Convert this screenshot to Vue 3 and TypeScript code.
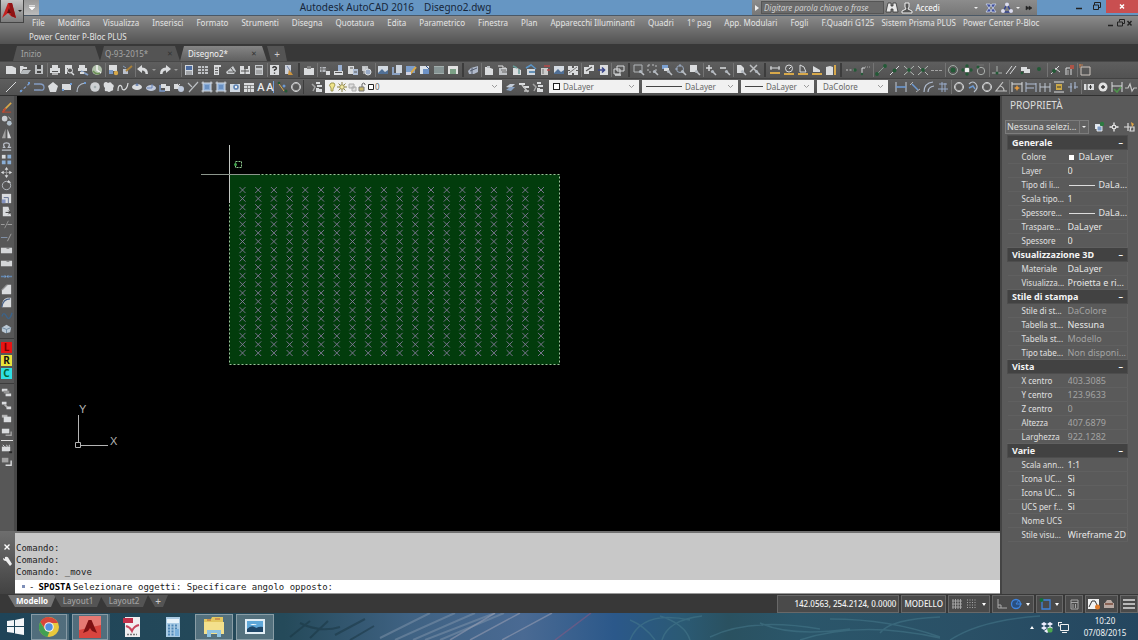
<script setup lang="ts">
import { ref } from 'vue'

const W = '#e6e8ea'
const B = '#6f9fdc'
const G = '#1f5a34'
const Y = '#e3b04a'

/* Small builders for the 14x14 icon artwork */
const s = (d: string, c = W, w = 1) => `<path d="${d}" fill="none" stroke="${c}" stroke-width="${w}"/>`
const f = (d: string, c = W) => `<path d="${d}" fill="${c}"/>`
const c = (x: number, y: number, r: number, fill = 'none', stroke = 'none') =>
  `<circle cx="${x}" cy="${y}" r="${r}" fill="${fill}" stroke="${stroke}"/>`
const glass = s('M9 9l3 3', '#c9ccd0', 1.6) + c(8.5, 8.5, 1.6, '#b9c0c8')

const icons: Record<string, string> = {
  blank: f('M2 3h6l4 2v6H2z'),
  open: f('M2 3h3l1 1h3v2H5l-2 4H2z') + f('M5 7h8l-3 4H2z', '#bfc3c6'),
  save: f('M3 2h8v9H3z', '#c6c9cc') + f('M5 2h4v4H5z', '#444') + f('M5 8h4v2H5z', '#444'),
  print: f('M4 2h6v3H4zM2 5h10v5H2z') + f('M4 8h6v1H4z', '#555') + f('M4 10h6v2H4z', '#bbb'),
  preview: f('M3 2h7v3H5v6H3z') + c(8, 7.5, 2.5, '#555', W) + s('M9 9l3 3', W, 1.5),
  plot: f('M3 2h6v3H3zM2 5h9v3H2z') + s('M5 8l7 4', '#8ba7cf', 2) + f('M4 9h4v2H4z'),
  globe: c(7, 7, 5, '#b9cbb2') + s('M7 2v5l4 3', '#fff', 1.5) + s('M3 8q3 4 7 2', '#6d9556', 1.5),
  sheet: f('M3 2h8v6H3z') + f('M3 7h4v4H3z', '#7fa0d0') + c(10, 10, 2.2, Y),
  spark: f('M3 6h5v5H3z', '#c3cad6') + s('M6 8l6-5', '#b08436', 2) + s('M3 3l3 2', '#8ca4c8'),
  undo: f('M1 6l5-4v2.500q6 0 6 6.500h-2.500q0-3.500-3.500-3.500V10z'),
  redo: f('M13 6L8 2v2.500q-6 0-6 6.500h2.500q0-3.500 3.500-3.500V10z'),
  props: f('M3 2h8v10H3z', '#dce1e8') + f('M4 3h6v4H4z', '#4d6fa8') + s('M4 9h6M4 11h6', '#777'),
  grid: f('M2 3h10v8H2z', '#c9ccd0') + s('M2 5.500h10M5.500 3v8M8.500 3v8M2 8.500h10', '#666'),
  palette: f('M4 2h7v2H9v8H4z') + s('M5 5h3M5 7.500h3M5 10h3', '#555'),
  sets: f('M2 9l7-6 3 5-2 3H3z', '#d2d5d8') + s('M4 9h7M7 5l3 4', '#555'),
  markup: f('M2 3h4v3h4V3h2v8H2z') + s('M3 8h8M7 6v5', '#555'),
  calc: f('M3 2h8v10H3z', '#d0d3d6') + s('M4 4h6', '#555', 1.5) + s('M5 7v4M7 7v4M9 7v4', '#888'),
  help: f('M2 2h9v10H2z') + s('M4.500 5q2-2.500 4 0 0 1.500-2 2v1M6.500 9.500v1.200', '#333', 1.3),
  note: f('M3 2h6v9H3z', '#d5dbe6') + f('M7 6l4 6H6z', '#d79a3c') + s('M5 3l4 6', '#7c8fb5'),
  book: f('M2 5h3V3h4v2h3v7H2z') + f('M5 3h4v3H5z', '#888'),
  group: f('M2 4h6v5H2z', '#bfc3c8') + s('M4 2v9M2 6h9M8 5v7', '#666') + f('M8 8h4v4H8z'),
  attach: f('M2 8h9v4H2z') + f('M6 2h4v6H6z', '#9fb7db') + s('M3 9.500h7', '#555'),
  clip: f('M2 3h6v8H2z') + f('M7 6h5v6H7z', '#b7c7df') + s('M4 5h3M8 9h3', '#555'),
  link: f('M2 3h6v5H2z', '#c9ccd0') + c(8, 9, 3, '#9fb2d0', W) + s('M4 4v7', W),
  image: f('M2 3h10v8H2z', '#dfe7ef') + f('M2 10l4-4 3 3 3-2v4H2z', '#50729b'),
  frame: f('M6 2h6v8H6z', '#d6dee8') + s('M3 4v7h7', '#8fa8cc', 2),
  imgEdit: f('M2 3h9v7H2z', '#7fa3d4') + s('M6 11l6-7', Y, 2) + f('M2 9h5v3H2z', '#dde'),
  imgBlue: f('M2 3h9v8H2z', '#e6edf5') + f('M5 6h6v5H5z', '#6f97cf') + s('M8 3l3 3', '#30518a'),
  imgGrey: f('M2 3h10v8H2z', '#a9b6b4') + s('M2 5h10M2 7h10M2 9h10', '#6d7f80'),
  imgGreen: f('M2 3h10v8H2z', '#eee') + f('M4 6h6v5H4z', '#7fa78a'),
  vehicle: f('M2 8l3-3 7-2v6l-4 2H3z', '#b8c2d4') + s('M4 8l7-3M6 5v6', '#525d70'),
  house: f('M3 4h3l5 2v6H3z') + f('M5 3h3v2H5z', '#c4c8cc'),
  houseSel: f('M3 5h8v7H3z', '#c8ccd0') + s('M2 3h5v5M9 4v3', '#eee') + s('M5 7h5M6 9h5', '#666'),
  houseA: f('M3 5h4l4 2v5H3z') + s('M3 3l4 2M9 6v5', '#6aa3a0', 1.5),
  houseB: f('M3 6h8v6H3z', '#dce3ea') + s('M2 5l5-3 5 4', '#5b9ad0', 1.5) + s('M5 9h6', '#3f7bb0', 1.5),
  houseR: f('M3 5h7v7H3z', '#d8d8d8') + s('M6 3h6M9 7h3', '#c04848', 1.5) + s('M5 6v5', '#777'),
  puzzle: f('M2 3h4v2h2V3h4v4h-2v1h2v4H8v-2H6v2H2V8h2V7H2z') + s('M3 10l8-6', '#777'),
  pages: f('M2 4h5v7H2zM7 2h5v6H7z') + s('M4 8l6-4', '#555', 1.2),
  pageIn: f('M4 2h8v10H4z') + s('M2 7h6M6 4.500L8.500 7 6 9.500', '#39458f', 1.6),
  windows: s('M5 3h7v5H5zM2 6h6v5H2z') + s('M3 12h6', W, 1.5),
  zoomWin: s('M2 2h8v7H2z', '#b9bdc0') + glass,
  zoomDyn: `<path d="M2 2h8v7H2z" fill="none" stroke="#c6c8ca" stroke-dasharray="2 2"/>` + glass,
  zoomScale: f('M2 2h6v4H2z', '#7ea6dc') + f('M4 5h5v3H4z') + glass,
  zoomCtr: c(6, 6, 3.500, 'none', '#9fb0c8') + s('M6 1v3M1 6h3', '#9fb0c8') + glass,
  zoomObj: f('M2 2h7v7H2z') + glass,
  zoomIn: s('M2 5h6M5 2v6', W, 1.5) + glass,
  zoomOut: s('M2 5h6', W, 1.5) + glass,
  zoomAll: f('M3 2h4l3 3v5H3z') + glass,
  zoomExt: s('M2 2l7 7M9 2L2 9', '#c6c8ca', 1.5) + glass,
  dist: s('M2 5h10M3 3v4M11 3v4') + s('M2 10h10', Y, 2),
  radius: c(7, 5.500, 3.500, 'none', W) + s('M7 6l2-2') + s('M2 11h10', Y, 2),
  angle: s('M4 2v7h6L8 4 4 2') + s('M2 11h10', Y, 2),
  area: f('M3 3l7 4v2H3z') + s('M2 11h10', Y, 2),
  volume: f('M2 4l4-1 3 1v8H2z') + s('M11 2v10', Y, 2),
  trackA: `<path d="M2 7h8" stroke="#ccc" stroke-dasharray="2 1.500"/>` + c(11, 7, 1.7, G),
  trackB: s('M4 12V5h3') + `<path d="M7 4h6" stroke="#aaa" stroke-dasharray="1 1"/>` + c(4, 11, 1.2, G),
  end: s('M3 11l8-8', '#8ea395') + c(3, 11, 1.9, G) + c(11, 3, 1.9, G),
  mid: s('M2 12l9-9') + c(6.500, 7.500, 2, G),
  inter: s('M2 3l10 9M12 3L2 12', '#bcc4bf') + c(7, 7, 1.9, G),
  appInt: s('M2 3l3 3M12 3L2 12M9 9l3 3', '#bcc4bf') + c(7, 7, 1.9, G),
  ext: `<path d="M1 7.500h12" stroke="#aaa" stroke-dasharray="3 1"/>`,
  center: c(7, 7, 4.500, 'none', '#a9b4ad') + c(7, 7, 2.500, G),
  quad: c(7, 7, 2.500, '#fff') + c(7, 3, 1.7, G) + c(7, 11, 1.7, G) + c(3, 7, 1.700, G) + c(11, 7, 1.7, G),
  tan: c(7, 8, 3.700, 'none', '#b3b8b5') + s('M3 2h7', '#777') + c(4, 4, 1.500, G),
  perp: s('M2 10h10M7 3v7', '#b3b8b5') + c(7, 10, 1.5, G),
  para: s('M2 11l6-8M6 11l6-8'),
  insert: f('M3 4h6v4H3zM6 6h6v4H6z') + c(4, 10, 1.300, G),
  node: c(7, 6, 2, G),
  near: s('M3 11l8-8M7 5l5 4') + c(6, 8, 2, G),
  none: s('M4 12V5h5v7') + f('M8 2h4v4H8z', '#b55446') + s('M6 7v5', '#bbb'),
  osnap: s('M3 4h9v8H3z', '#d8cfc8') + s('M1 2h4M2 1v4', '#c78152'),
  line: s('M2 12L12 2'),
  xline: `<path d="M2 12L12 3" stroke="#8aa8d8" stroke-width="1.200" stroke-dasharray="3 2"/>` + f('M10 2h2v2h-2zM2 10h2v2H2z', B),
  pline: s('M2 4h6q4 0 4 3.500T8 10H2', '#88a2cc', 1.3),
  poly: f('M7 2l5 4-2 6H4L2 6z'),
  rect: f('M2 4h9v6H2z') + f('M2 9h2v2H2zM10 3h2v2h-2z', B),
  arc: s('M3 12Q3 4 11 3', '#b9c3d1', 1.2) + f('M10 2h2v2h-2z', B),
  circle: c(7, 7, 4.800, '#d9dcdf') + c(7, 7, 1.300, '#aab6b8'),
  cloud: f('M2 3q2-2 4 0 3-2 4 1 3 1 1 4 1 3-2 3-2 2-4 0-3 1-2-3-2-2-1-5z'),
  spline: s('M2 11c0-8 4-6 4-3s5 3 6-5', W, 1.2),
  ellipse: `<ellipse cx="7" cy="7" rx="5" ry="3" fill="${W}"/>` + s('M7 3v3M5.500 5h3', '#5272ad'),
  ellArc: `<ellipse cx="7" cy="8" rx="5" ry="3" fill="#c9d3e6"/>` + s('M3 8h5V4', '#6685bf'),
  block: f('M3 4h5v4H3zM7 6h5v5H7z') + s('M2 5v6h5', '#7e9fd4', 1.5),
  mkBlock: f('M2 4h6v5H2z') + c(9, 9, 3, '#c8d4e8') + s('M5 3l3 3', '#777'),
  point: s('M2 3l4 4M12 2L3 12', '#c4c8cc', 1.2),
  hatch: f('M3 3h8v8H3z', '#8fb3e0') + s('M1.500 3h11M1.500 11h11M3 1.500v11M11 1.500v11', '#dfe6ef') + f('M5 5h4v4H5z', '#6c96cc'),
  region: f('M2 4h10v8H2z', '#dbe4ee') + c(8, 7, 2.800, '#5d87bd') + c(8, 7, 1.200, '#fff'),
  table: f('M2 3h10v9H2z') + s('M2 5.500h10M2 8.500h10M5.500 5v7M8.500 5v7', '#777', 0.8),
  dots: c(4, 3, 1.300, G) + c(9, 6, 1.500, B) + c(11, 11, 1.500, G) + s('M4 4l5 7', Y),
  ring: c(7, 7, 4.500, 'none', W) + c(7, 7, 3.800, 'none', '#bbb'),
  layers: f('M6 2h4v2H6zM7 5h5v2H7zM6 8h3v4H6zM9 9h3v3H9z') + s('M2 4l3 3-2 4', '#aaa', 1.5),
  layPrev: f('M3 7l4-3h5l-4 4z', '#cdd6e2') + f('M3 10l4-3h5l-4 4z', '#8ea9cc'),
  layMatch: f('M2 3h6v2H2zM6 6h6v2H6z') + s('M5 5l6 7M7 11h5', '#ccc', 1.5),
  dimLin: s('M2 2v10M12 2v10', '#ccd5e3') + s('M2 7h10', B, 1.6),
  dimAl: s('M2 5l3-3M8 12l4-3', '#bbb') + s('M4 4l6 6', B, 1.5),
  dimArc: s('M2 12q0-9 9-10M6 12q0-5 6-6', '#b7c4d8', 1.2),
  dimOrd: s('M2 9h10M6 2v10M9 3v9M3 4h8', '#9fb3d4'),
  dimJog: s('M3 4q4-4 7 0t-2 8', '#c3cad4', 1.2) + s('M3 8l4-2 2 3', B, 1.4),
  dimAng: s('M9 2L2 11h11M6 6q4 1 4 5', '#ccc', 1.2),
  dimQ: s('M2 2v10M12 2v10M2 4h10') + f('M7 5l1 2 2 1-2 1-1 2-1-2-2-1 2-1z', '#f0a03c'),
  dimBase: s('M2 2v10M2 4h10M2 8h8M12 3v9', '#b9c8e0'),
  dimCont: s('M2 3v9M7 3v9M12 3v9M2 7h10', '#c8d0dc'),
  dimSp: s('M2 2h10M2 12h10') + f('M4 4h6v6H4z', '#d6b047') + s('M5 7h4', '#333'),
  dimBr: s('M2 7h4M8 7h4M5 3v9M9 2v7', '#a9b9d4', 1.2),
  tol: f('M2 4h10v6H2z') + s('M5 4v6M7 7h3M8.500 5v4', '#333'),
  mark: c(7, 7, 4.500, '#eee') + s('M5 7h4M7 5v4', '#333', 1.300),
  insp: s('M2 2v10M12 2v10M2 6h10') + s('M4 9l3 3 4-5', '#4f9a4c', 1.6),
  jog: s('M1 8h3l2-4 2 7 2-3h3', '#ccc', 1.2),
  erase: s('M4 10l8-8', Y, 1.8) + s('M2 12h10', '#b64b34', 1.200) + s('M3 12l3-4', '#c64930', 2),
  copy: c(5, 5, 3, '#d5d9de') + c(10, 10, 2.600, '#b9c9d6') + s('M9 3l3 3', '#ddd'),
  mirror: f('M6 2v10H2z', '#aaa') + f('M8 2v10h4z'),
  offset: s('M2 11h10M3 8h2q-3-5 2-5t2 5h3', '#c4cad4', 1.4),
  array: f('M2 2h4v4H2z') + f('M8 2h4v4H8zM2 8h4v4H2zM8 8h4v4H8z', '#8fb6e0'),
  move: s('M7 2v10M2 7h10', '#999') + f('M7 1l2 3H5zM7 13l2-3H5zM1 7l3-2v4zM13 7l-3-2v4z'),
  rotate: c(7, 7, 4.500, 'none', '#bfc5cc') + f('M9 1l3 3H8z'),
  scale: f('M2 2h10v10H2z') + s('M4 6h5v6', '#5f6f95') + f('M2 8h4v4H2z', '#8797c8'),
  stretch: f('M3 2h6l3 10H3z') + s('M6 8h5M9 6l2 2-2 2', '#333'),
  trim: s('M1 7h4M8 7h5', '#aaa') + s('M5 11l4-8', '#999'),
  extend: s('M1 7h7', '#889bb5') + s('M8 11l4-8', '#aaa'),
  brk: f('M1 4h12v6H1z', '#dfe1e4') + f('M7 4h3v1H7z', '#666'),
  join: s('M1 7h4M9 7h4', '#638cb8', 1.5) + f('M5 5l2 2-2 2zM9 5L7 7l2 2z', '#7baae0'),
  chamfer: f('M2 12V7l5-5h5v10z') + s('M2 8l6-6', '#777'),
  fillet: f('M2 12q0-9 6-10h4v10z') + s('M2 12q1-9 9-9', '#49658f', 1.4),
  blend: s('M2 8q2-6 5 0t6-4', '#3a648e', 1.5),
  explode: f('M2 6l5-3 5 3-1 5-5 1-4-2z', '#c3d2df') + s('M2 6l5 2 5-2M7 8v4', '#6f8da5'),
  order: f('M2 3h6v3H2zM6 8h6v3H6z') + f('M4 5h6v3H4z', '#999'),
  orderB: f('M2 3h5v3H2zM7 8h5v3H7z') + s('M5 6l3 3', '#bbb', 2),
  orderC: f('M2 3h6v3H2z', '#bbb') + f('M4 5h8v6H4z'),
  orderD: f('M2 4h8v5H2z') + s('M6 11h6V7', '#aaa', 1.5),
  orderE: f('M2 5h9v5H2z') + s('M3 3l2 2M7 3l1 2M10 3v2') + f('M10 10h3v2h-3z', '#222'),
  hatchB: f('M2 3h7v5H2z', '#aaa') + s('M6 11h6V6', W, 1.5),
}

const barOne: string[][][] = [
  [
    ['blank', 'open', 'save'], ['print', 'preview', 'plot', 'globe'], ['sheet', 'spark'],
    ['undo', '', 'redo', ''], ['props', 'grid', 'palette', 'sets', 'markup', 'calc'], ['help', 'note'],
  ],
  [['book'], ['group', 'attach', 'clip', 'link'], ['image', 'frame', 'imgEdit', 'imgBlue', 'imgGrey', 'imgGreen']],
  [['vehicle'], ['house', 'houseSel', 'houseA', 'houseB', 'houseR', 'image', 'puzzle'], ['pages', 'pageIn'], ['windows']],
  [['zoomWin', 'zoomDyn', 'zoomScale', 'zoomCtr', 'zoomObj'], ['zoomIn', 'zoomOut'], ['zoomAll', 'zoomExt']],
  [['dist', 'radius', 'angle', 'area', 'volume']],
  [
    ['trackA', 'trackB'], ['end', 'mid', 'inter', 'appInt', 'ext'], ['center', 'quad', 'tan'],
    ['perp', 'para', 'insert', 'node'], ['near', 'none'], ['osnap'],
  ],
]
const drawTools = [
  'line', 'xline', 'pline', 'poly', 'rect', 'arc', 'circle', 'cloud', 'spline', 'ellipse', 'ellArc',
  'block', 'mkBlock', 'point', 'hatch', 'hatch', 'region', 'table', 'A', 'A|', 'dots', 'ring',
]
const dimTools = [
  ['dimLin', 'dimAl', 'dimArc', 'dimOrd'], ['ring', 'dimJog', 'ring', 'dimAng'],
  ['dimQ', 'dimBase', 'dimCont', 'dimSp', 'dimBr'], ['tol', 'mark', 'insp', 'jog'],
]
const modifyTools = [
  'erase', 'copy', 'mirror', 'offset', 'array', 'move', 'rotate', 'scale', 'stretch',
  'trim', 'extend', 'brk', 'brk', 'join', 'chamfer', 'fillet', 'blend', 'explode',
]
const lisp = [
  { t: 'L', k: 'red' }, { t: 'R', k: 'yellow' }, { t: 'C', k: 'cyan' },
]
const orderTools = ['order', 'orderB', 'orderC', 'orderD']

const menus = [
  'File', 'Modifica', 'Visualizza', 'Inserisci', 'Formato', 'Strumenti', 'Disegna', 'Quotatura', 'Edita',
  'Parametrico', 'Finestra', 'Plan', 'Apparecchi Illuminanti', 'Quadri', '1° pag', 'App. Modulari', 'Fogli',
]
const menusEnd = ['F.Quadri G125', 'Sistem Prisma PLUS', 'Power Center P-Bloc']

interface Row { k: string; v: string; dim?: boolean; mark?: 'box' | 'line' }
const sections: { title: string; rows: Row[] }[] = [
  {
    title: 'Generale',
    rows: [
      { k: 'Colore', v: 'DaLayer', mark: 'box' }, { k: 'Layer', v: '0' },
      { k: 'Tipo di li...', v: 'DaLa...', mark: 'line' }, { k: 'Scala tipo...', v: '1' },
      { k: 'Spessore...', v: 'DaLa...', mark: 'line' }, { k: 'Traspare...', v: 'DaLayer' }, { k: 'Spessore', v: '0' },
    ],
  },
  { title: 'Visualizzazione 3D', rows: [{ k: 'Materiale', v: 'DaLayer' }, { k: 'Visualizza...', v: 'Proietta e ri...' }] },
  {
    title: 'Stile di stampa',
    rows: [
      { k: 'Stile di st...', v: 'DaColore', dim: true }, { k: 'Tabella st...', v: 'Nessuna' },
      { k: 'Tabella st...', v: 'Modello', dim: true }, { k: 'Tipo tabe...', v: 'Non disponi...', dim: true },
    ],
  },
  {
    title: 'Vista',
    rows: [
      { k: 'X centro', v: '403.3085', dim: true }, { k: 'Y centro', v: '123.9633', dim: true },
      { k: 'Z centro', v: '0', dim: true }, { k: 'Altezza', v: '407.6879', dim: true },
      { k: 'Larghezza', v: '922.1282', dim: true },
    ],
  },
  {
    title: 'Varie',
    rows: [
      { k: 'Scala ann...', v: '1:1' }, { k: 'Icona UC...', v: 'Sì' }, { k: 'Icona UC...', v: 'Sì' },
      { k: 'UCS per f...', v: 'Sì' }, { k: 'Nome UCS', v: '' }, { k: 'Stile visu...', v: 'Wireframe 2D' },
    ],
  },
]

const markCols = Array.from({ length: 20 }, (_, i) => Math.round((225.5 + i * 15.71) * 10) / 10)
const markRows = Array.from({ length: 20 }, (_, i) => Math.round((94 + i * 8.58) * 10) / 10)
const cross = (x: number, y: number) => `M${x - 3} ${y - 3}l6 6m0-6l-6 6`
const marks = markRows.map(y => markCols.map(x => cross(x, y)).join('')).join('')

const search = ref('')
const command = ref('Selezionare oggetti: Specificare angolo opposto:')
</script>

<template>
  <div class="app">
    <header class="title">
      <button class="logo" aria-label="Menu applicazione">
        <svg width="24" height="23" viewBox="0 0 24 23">
          <path d="M2 18L8 3h4l4 15-5-2-3-3z" fill="#c3211f" />
          <path d="M9 3h3l4 15-5-2z" fill="#8f1415" />
          <path d="M9 8l2 5H7z" fill="#5e0f10" />
          <path d="M18 10h4l-2 2z" fill="#222" />
        </svg>
      </button>
      <button class="quick" aria-label="Personalizza barra"><svg width="8" height="8" viewBox="0 0 8 8"><path d="M1 1.500h6M1 3h6L4 6z" fill="#fff" stroke="#fff" stroke-width=".6" /></svg></button>
      <div class="name"><span>Autodesk AutoCAD 2016</span><span>Disegno2.dwg</span></div>
      <div class="info">
        <svg width="9" height="14" viewBox="0 0 9 14"><path d="M3 4l4 3-4 3z" fill="#eee" /></svg>
        <input v-model="search" aria-label="Cerca" placeholder="Digitare parola chiave o frase">
        <button aria-label="Trova"><svg width="14" height="14" viewBox="0 0 14 14"><path d="M3 2h3v3h2V2h3l2 9H8V8H6v3H1z" fill="#e8e8e8" stroke="#333" stroke-width=".8" /></svg></button>
        <button class="login"><svg width="14" height="14" viewBox="0 0 14 14"><path d="M5 2h4v4L8 8l4 2v2H2v-2l4-2-1-2z" fill="#555" stroke="#eee" /></svg>Accedi<i class="caret small push"></i></button>
        <button aria-label="Exchange"><svg width="14" height="14" viewBox="0 0 14 14"><path d="M2 3h4l6 8H8zM12 3H8L2 11h4z" fill="#3f4f9c" stroke="#cdd6ec" stroke-width=".8" /></svg></button>
        <button class="conn" aria-label="Connessione"><svg width="14" height="14" viewBox="0 0 14 14"><path d="M7 3L3 11h8z" fill="none" stroke="#33438f" stroke-width="1.500" /><circle cx="7" cy="3.500" r="2" fill="#dde" /><circle cx="3" cy="10" r="2" fill="#dde" /><circle cx="11" cy="10" r="2" fill="#dde" /></svg><i class="caret small"></i></button>
        <button aria-label="Altro"><svg width="14" height="14" viewBox="0 0 14 14"><path d="M4 5l3 2-3 2zM7 5l3 2-3 2z" fill="#222" stroke="#222" stroke-width=".5" /></svg></button>
      </div>
      <div class="wincontrols">
        <button aria-label="Riduci"><svg width="14" height="13" viewBox="0 0 14 13"><path d="M4 8.500h6" stroke="#222" stroke-width="1.500" /></svg></button>
        <button aria-label="Ripristina"><svg width="14" height="13" viewBox="0 0 14 13"><path d="M4.500 5V2.500h6v5H9M3.500 5h5v4.500h-5z" fill="none" stroke="#222" /></svg></button>
        <button class="close" aria-label="Chiudi"><svg width="14" height="13" viewBox="0 0 14 13"><path d="M5 4.500l4 4m0-4l-4 4" stroke="#fff" stroke-width="1.500" /></svg></button>
      </div>
    </header>

    <nav class="menus">
      <div class="menurow">
        <button v-for="m in menus" :key="m">{{ m }}</button>
        <button v-for="m in menusEnd" :key="m" class="tight">{{ m }}</button>
        <svg class="mdi" width="26" height="10" viewBox="0 0 26 10"><path d="M1 7.500h5" stroke="#222" stroke-width="1.500" /><path d="M12.500 3.500v-2h5v4h-2M10.500 4h5v4h-5z" fill="none" stroke="#222" /><path d="M20.500 3l4 4.500m0-4.500l-4 4.500" stroke="#222" stroke-width="1.400" /></svg>
      </div>
      <div class="menurow second"><button>Power Center P-Bloc PLUS</button></div>
    </nav>

    <div class="filetabs">
      <button class="ftab">Inizio</button>
      <button class="ftab mid">Q-93-2015*<span>✕</span></button>
      <button class="ftab active">Disegno2*<span>✕</span></button>
      <button class="ftab plus" aria-label="Nuovo">+</button>
    </div>

    <div class="bar">
      <div v-for="(tb, i) in barOne" :key="i" class="strip">
        <div v-for="(g, j) in tb" :key="j" class="grp">
          <button v-for="(n, k) in g" :key="k" :class="n ? 'ic' : 'drop'" :aria-label="n || 'elenco'">
            <svg v-if="n" width="14" height="14" viewBox="0 0 14 14" v-html="icons[n]"></svg>
            <i v-else class="caret faint"></i>
          </button>
        </div>
      </div>
    </div>

    <div class="bar two">
      <div class="draw">
        <button v-for="(n, k) in drawTools" :key="k" class="ic" :aria-label="n">
          <svg v-if="icons[n]" width="14" height="14" viewBox="0 0 14 14" v-html="icons[n]"></svg>
          <b v-else :class="{ cursor: n === 'A|' }">A</b>
        </button>
      </div>
      <button class="ic lay" aria-label="Proprietà layer"><svg width="14" height="14" viewBox="0 0 14 14" v-html="icons.layers"></svg></button>
      <label class="combo layer">
        <svg width="52" height="12" viewBox="0 0 52 12">
          <path d="M4 7Q1 4 4 2q4-1 4 2L6 8v2H4z" fill="#f0e48a" stroke="#8a8540" stroke-width=".8" />
          <circle cx="15" cy="6" r="2.300" fill="#f2e9a4" stroke="#8d8446" />
          <path d="M15 1v2M15 9v2M10 6h2M18 6h2M11.500 2.500l1.500 1.500M18.500 2.500L17 4M11.500 9.500L13 8M18.500 9.500L17 8" stroke="#8d8446" />
          <path d="M22 3h5v4h-5zM25 6h4v4h-4z" fill="#ddd" stroke="#aaa" />
          <path d="M32 6h5v4h-5z" fill="#c8b86a" stroke="#777" /><path d="M35 6V3q2-2 3 0v1" fill="none" stroke="#666" />
          <path d="M41.500 3.500h5v5h-5z" fill="#fff" stroke="#222" />
        </svg>
        <select aria-label="Layer"><option>0</option></select>
        <svg class="chev" width="7" height="5" viewBox="0 0 7 5"><path d="M1 1l2.500 2.500L6 1" fill="none" stroke="#999" /></svg>
      </label>
      <button class="ic" aria-label="Layer precedente"><svg width="14" height="14" viewBox="0 0 14 14" v-html="icons.layPrev"></svg></button>
      <button class="ic" aria-label="Corrispondenza layer"><svg width="14" height="14" viewBox="0 0 14 14" v-html="icons.layMatch"></svg></button>
      <button class="ic" aria-label="Stati layer"><svg width="14" height="14" viewBox="0 0 14 14" v-html="icons.layers"></svg></button>
      <label class="combo color">
        <span class="swatch"></span>
        <select aria-label="Colore"><option>DaLayer</option></select>
        <svg class="chev" width="7" height="5" viewBox="0 0 7 5"><path d="M1 1l2.500 2.500L6 1" fill="none" stroke="#999" /></svg>
      </label>
      <label class="combo ltype">
        <span class="rule"></span>
        <select aria-label="Tipo di linea"><option>DaLayer</option></select>
        <svg class="chev" width="7" height="5" viewBox="0 0 7 5"><path d="M1 1l2.500 2.500L6 1" fill="none" stroke="#999" /></svg>
      </label>
      <label class="combo lweight">
        <span class="rule short"></span>
        <select aria-label="Spessore di linea"><option>DaLayer</option></select>
        <svg class="chev" width="7" height="5" viewBox="0 0 7 5"><path d="M1 1l2.500 2.500L6 1" fill="none" stroke="#999" /></svg>
      </label>
      <label class="combo plotst">
        <select aria-label="Stile di stampa"><option>DaColore</option></select>
        <svg class="chev" width="7" height="5" viewBox="0 0 7 5"><path d="M1 1l2.500 2.500L6 1" fill="none" stroke="#999" /></svg>
      </label>
      <div class="strip dims">
        <div v-for="(g, j) in dimTools" :key="j" class="grp">
          <button v-for="(n, k) in g" :key="k" class="ic" :aria-label="n"><svg width="14" height="14" viewBox="0 0 14 14" v-html="icons[n]"></svg></button>
        </div>
      </div>
    </div>

    <main class="main">
      <div class="left">
        <div class="work">
          <aside class="side">
            <button v-for="(n, k) in modifyTools" :key="k" :aria-label="n"><svg width="13" height="13" viewBox="0 0 14 14" v-html="icons[n]"></svg></button>
            <hr>
            <button v-for="l in lisp" :key="l.t"><b :class="l.k">{{ l.t }}</b></button>
            <hr>
            <button v-for="n in orderTools" :key="n" :aria-label="n"><svg width="13" height="13" viewBox="0 0 14 14" v-html="icons[n]"></svg></button>
            <hr class="white">
            <button aria-label="Annotazioni"><svg width="13" height="13" viewBox="0 0 14 14" v-html="icons.orderE"></svg></button>
            <button aria-label="Tratteggi"><svg width="13" height="13" viewBox="0 0 14 14" v-html="icons.hatchB"></svg></button>
          </aside>
          <div class="canvas">
            <svg width="100%" height="100%">
              <rect x="212.500" y="78.500" width="330" height="190" fill="#023c0c" />
              <path :d="marks" fill="none" stroke="#85789a" stroke-width=".9" />
              <rect x="212.500" y="78.500" width="330" height="190" fill="none" stroke="#9cc79c" stroke-dasharray="2 2" />
              <path d="M212.500 49v58" stroke="#c4c8c4" />
              <path d="M184 78.500h59" stroke="#8c968c" />
              <rect x="218.500" y="65.500" width="6" height="6" fill="none" stroke="#8fc98f" stroke-dasharray="2 1" />
              <circle cx="218.500" cy="68.500" r="1.500" fill="#3fa34a" />
              <path d="M61.500 319v27M64 349.500h27M58.500 346.500h5v5h-5z" fill="none" stroke="#b4b4b4" />
              <text x="62" y="317">Y</text>
              <text x="93" y="349">X</text>
            </svg>
          </div>
        </div>
        <section class="cmd">
          <div class="grip">
            <button aria-label="Chiudi riga di comando"><svg width="12" height="12" viewBox="0 0 12 12"><path d="M3.500 3.500l5 5m0-5l-5 5" stroke="#fff" stroke-width="1.400" /></svg></button>
            <button aria-label="Personalizza"><svg width="12" height="12" viewBox="0 0 12 12"><path d="M2 3l2 1V2q3-1 4 2l3 5-2 2-4-5Q2 6 2 3z" fill="#eee" /></svg></button>
          </div>
          <div class="console">
            <pre class="history">Comando:
Comando:
Comando: _move</pre>
            <label class="prompt"><i></i><span>-</span><b>SPOSTA</b><input v-model="command" spellcheck="false"></label>
          </div>
        </section>
      </div>

      <aside class="props">
        <h2>PROPRIETÀ</h2>
        <div class="pick">
          <label class="selwrap"><select aria-label="Selezione"><option>Nessuna selezi...</option></select><i class="caret"></i></label>
          <button aria-label="Attiva PICKADD"><svg width="12" height="12" viewBox="0 0 12 12"><path d="M2 3h5v5H2z" fill="#dfe6ee" /><path d="M4 5h5v5H4z" fill="#7d9bc4" stroke="#fff" stroke-width=".8" /><circle cx="9" cy="3" r="2.200" fill="#2c7a40" /></svg></button>
          <button aria-label="Seleziona oggetti"><svg width="12" height="12" viewBox="0 0 12 12"><path d="M6 1.500v3M6 7.500v3M1.500 6h3M7.500 6h3" stroke="#eee" stroke-width="1.300" /><rect x="4.500" y="4.500" width="3" height="3" fill="none" stroke="#ddd" /></svg></button>
          <button aria-label="Selezione rapida"><svg width="12" height="12" viewBox="0 0 12 12"><path d="M1 6h7M5 2v8M8 6h3v4H7z" stroke="#ddd" fill="none" stroke-width="1.200" /><path d="M8 1l3 2-2 3z" fill="#e3a94a" /></svg></button>
        </div>
        <table>
          <tbody v-for="sec in sections" :key="sec.title">
            <tr class="head"><th colspan="2"><span>{{ sec.title }}</span><em>–</em></th></tr>
            <tr v-for="(r, i) in sec.rows" :key="i">
              <th scope="row">{{ r.k }}</th>
              <td :class="{ dim: r.dim }"><i v-if="r.mark" :class="r.mark"></i>{{ r.v }}</td>
            </tr>
          </tbody>
        </table>
      </aside>
    </main>

    <footer class="status">
      <div class="ltabs">
        <button class="on">Modello</button><button>Layout1</button><button>Layout2</button><button class="add" aria-label="Nuovo layout">+</button>
      </div>
      <div class="cells">
        <div class="cell coords">142.0563, 254.2124, 0.0000</div>
        <button class="cell model">MODELLO</button>
        <div class="cell">
          <svg width="14" height="14" viewBox="0 0 14 14"><path d="M3 2v10M5.500 2v10M8 2v10M10.500 2v10M2 4h10M2 7h10M2 10h10" stroke="#aaa" stroke-width=".9" /></svg>
          <svg width="14" height="14" viewBox="0 0 14 14"><path d="M2 3h10M2 5.500h10M2 8h10M2 10.500h10" stroke="#aaa" stroke-dasharray="1 1.500" /></svg>
          <i class="caret lite"></i>
        </div>
        <div class="cell">
          <svg width="14" height="14" viewBox="0 0 14 14"><path d="M4 2v9h9M4 8h3v3" fill="none" stroke="#aaa" /></svg>
          <svg width="14" height="14" viewBox="0 0 14 14"><circle cx="7" cy="7" r="4.500" fill="#294f80" stroke="#3f84dd" stroke-width="1.300" /><path d="M7 7h6M7 7l3-4" stroke="#3f84dd" /></svg>
          <i class="caret lite"></i>
        </div>
        <div class="cell">
          <svg width="14" height="14" viewBox="0 0 14 14"><path d="M4 3h8v9H4z" fill="none" stroke="#3f84dd" stroke-width="1.300" /><circle cx="3.500" cy="3" r="2" fill="#14703a" /></svg>
          <i class="caret lite"></i>
        </div>
        <div class="cell"><svg width="14" height="14" viewBox="0 0 14 14"><path d="M4 3h7v9H4zM4 5.500h7M6 7v4M8.500 7v4" fill="none" stroke="#a5a5a5" /></svg></div>
        <div class="cell">
          <svg width="14" height="14" viewBox="0 0 14 14"><path d="M1 2h11v10H1z" fill="#f2f2f2" /><path d="M2 10l3-6h3l3 6" fill="none" stroke="#333" /><circle cx="10.500" cy="10" r="2.500" fill="#e07b2a" /></svg>
          <svg width="14" height="14" viewBox="0 0 14 14"><path d="M3 6l2-3h4l2 3h1v5H2V6z" fill="#b9a9a2" /><path d="M3 7h8" stroke="#7a4b3a" stroke-width="1.500" /></svg>
        </div>
        <button class="cell" aria-label="Personalizzazione"><svg width="14" height="14" viewBox="0 0 14 14"><path d="M1 3h12M1 7h12M1 11h12" stroke="#ddd" stroke-width="1.600" /></svg></button>
      </div>
    </footer>

    <div class="taskbar">
      <svg class="wall" viewBox="0 0 1138 27" preserveAspectRatio="none">
        <defs><linearGradient id="sky" x1="0" x2="1" y1="0" y2="0">
          <stop offset="0" stop-color="#1f4458" /><stop offset=".25" stop-color="#254a5a" /><stop offset=".36" stop-color="#3f6283" />
          <stop offset=".46" stop-color="#4a6a93" /><stop offset=".54" stop-color="#2b588a" /><stop offset=".6" stop-color="#2b5a74" />
          <stop offset=".64" stop-color="#2a5160" /><stop offset=".7" stop-color="#2b566a" /><stop offset=".85" stop-color="#2a5066" /><stop offset="1" stop-color="#24465f" />
        </linearGradient></defs>
        <rect width="1138" height="27" fill="url(#sky)" />
        <g fill="none" stroke-opacity=".5">
          <path d="M380 25l50-25M395 27l60-27M413 27l62-27M425 27l70-27M440 27l64-27" stroke="#8295ac" stroke-width="2" />
          <path d="M470 27l50-27M502 27l50-27M450 27l45-27" stroke="#a3a6b8" stroke-width="1.500" />
          <path d="M555 27l36-27" stroke="#93577f" stroke-width="1.500" />
          <path d="M630 27q12-30 60-20M655 27q-10-14-25-20M662 27q6-20 40-24M690 27q-5-16-30-24M710 24q40-20 110-8M760 10q30 14 90 6M800 27q60-20 140-2M830 6q60 0 110 18M880 20q10-14 60-16M950 27q30-20 90-24" stroke="#477b8d" stroke-width="1.500" />
          <path d="M290 24l20-16M310 25l18-17M335 22l30-16M350 27l24-14M300 10q20 10 40 4" stroke="#17333f" stroke-width="2" />
        </g>
      </svg>
      <button class="tb start" aria-label="Start"><svg width="17" height="17" viewBox="0 0 17 17"><path d="M0 3l7-1v6H0zM8 2l9-2v8H8zM0 9h7v6l-7-1zM8 9h9v8l-9-1.500z" fill="#f4f6f8" /></svg></button>
      <button class="tb run stack" aria-label="Chrome"><svg width="22" height="22" viewBox="0 0 22 22"><circle cx="11" cy="11" r="10" fill="#e8c83c" /><path d="M2.300 6A10 10 0 0 1 20 7h-9l-4 6z" fill="#d6463a" /><path d="M2.300 6l5 8 4 2-2 5A10 10 0 0 1 2.300 6z" fill="#42a052" /><circle cx="11" cy="11" r="4.800" fill="#f2f2f2" /><circle cx="11" cy="11" r="3.700" fill="#4f8fe0" /></svg></button>
      <button class="tb run stack" aria-label="AutoCAD"><svg width="22" height="22" viewBox="0 0 22 22"><rect width="22" height="22" fill="#d8453f" /><path d="M0 0h22v9L0 14z" fill="#ee9d96" opacity=".6" /><path d="M4 17L9.500 4h3L18 17l-5-2-2-3-2 3z" fill="#7d1113" /></svg></button>
      <button class="tb" aria-label="PDF"><svg width="22" height="22" viewBox="0 0 22 22"><path d="M4 1h15v20H4z" fill="#f0eef0" /><path d="M2 2h10v5H2z" fill="#c1304a" /><path d="M5 10q4 1 6 5 2-5 7-6" fill="none" stroke="#c8445c" stroke-width="2" /><path d="M6 18.500h10" stroke="#777" stroke-width="1.500" stroke-dasharray="2 1" /></svg></button>
      <button class="tb" aria-label="Calcolatrice"><svg width="22" height="22" viewBox="0 0 22 22"><path d="M4 1h14v20H4z" fill="#a9cbe4" /><path d="M5 3h12v4H5z" fill="#e8f3fa" /><path d="M6 9.500h10M6 12.500h10M6 15.500h10M6 18.500h10" stroke="#4e86b5" stroke-width="1.800" stroke-dasharray="2 1.500" /><path d="M13 13h4v7h-4z" fill="#7ab1dc" /></svg></button>
      <button class="tb run" aria-label="Esplora file"><svg width="22" height="22" viewBox="0 0 22 22"><path d="M1 3h7l1-2h11v17H1z" fill="#e3c75f" /><path d="M1 6h20v12H1z" fill="#f3e08c" /><path d="M4 4h4M12 3h5" stroke="#b35c3c" /><path d="M4 21v-7h14v7h-4v-4H8v4z" fill="#8fc3e2" /></svg></button>
      <button class="tb run" aria-label="Immagini"><svg width="22" height="22" viewBox="0 0 22 22"><path d="M1 3h20v15H1z" fill="#e2eef5" /><path d="M3 5h16v11H3z" fill="#5fa7d8" /><path d="M3 13q5-5 9-1 4-2 7-1v5H3z" fill="#1f4668" /><path d="M6 9q3-2 7 0z" fill="#fff" /></svg></button>
      <div class="tray">
        <svg width="10" height="14" viewBox="0 0 10 14"><path d="M2 9h4L4 6z" fill="#fff" /></svg>
        <svg width="14" height="14" viewBox="0 0 14 14"><path d="M4 2l3 2-3 2-3-2zM10 2l3 2-3 2-3-2zM4 6l3 2-3 2-3-2zM10 6l3 2-3 2-3-2zM7 9l3 2-3 2-3-2z" fill="#eef" /><circle cx="10" cy="10" r="2.600" fill="#4ba64e" /></svg>
        <svg width="14" height="14" viewBox="0 0 14 14"><path d="M4.500 4.500h8v6h-8zM6 12.500h5M2.500 2v4h2M2 2.500h4" fill="none" stroke="#f0f0f0" /></svg>
        <div class="clock"><span>10:20</span><span>07/08/2015</span></div>
      </div>
    </div>
  </div>
</template>

<style>
html, body { margin: 0; background: #383838; }
</style>

<style scoped>
.app {
  font-family: "Noto Sans", "Open Sans", sans-serif;
  font-size: 8px;
  line-height: 12px;
  color: #e0e0e0;
  min-height: 100vh;
  display: flex;
  flex-direction: column;
  overflow: hidden;
}
* { box-sizing: border-box; }
button, select, input { font: inherit; color: inherit; background: none; border: 0; padding: 0; margin: 0; border-radius: 0; }
button { display: flex; align-items: center; justify-content: center; white-space: nowrap; }
select { appearance: none; outline: none; }
svg { display: block; flex: none; }
i { display: block; flex: none; }
.caret { border: 3px solid transparent; border-top-color: #eee; border-bottom: 0; width: 0; }
.caret.faint { border-width: 2px; border-bottom: 0; border-top-color: #999; }
.caret.small { border-width: 2px; border-bottom: 0; }

.title { position: relative; display: flex; height: 15px; background: #6696c3; }
.logo { position: absolute; left: 0; top: 0; width: 24px; height: 23px; background: linear-gradient(#c4c4c4, #7d7d7d); border: 1px solid #444; border-top: 0; z-index: 1; overflow: hidden; }
.quick { width: 15px; margin-left: 24px; background: linear-gradient(#999, #bbb); }
.name { flex: 1; display: flex; gap: 10px; justify-content: center; align-items: center; font-size: 10px; line-height: 15px; color: #17263a; }
.info { display: flex; align-items: center; width: 285px; background: linear-gradient(#8c8c8c, #777); color: #fff; }
.info input { width: 123px; height: 13px; background: #6a6a6a; border: 1px solid #555; padding: 0 2px; font-style: italic; outline: none; }
.info input::placeholder { color: #d0d0d0; opacity: 1; }
.info button { width: 16px; height: 14px; }
.info .login { width: 84px; gap: 2px; justify-content: flex-start; }
.info .conn { width: 22px; gap: 2px; }
.push { margin-left: auto; margin-right: 5px; }
.wincontrols { display: flex; width: 101px; justify-content: flex-end; align-items: flex-start; }
.wincontrols button { width: 18px; height: 13px; }
.wincontrols .close { width: 32px; background: #c94f50; }

.menus { background: linear-gradient(#8a8a8a 0%, #6e6e6e 50%, #525252 100%); border-top: 1px solid #4a5866; height: 29px; }
.menurow { display: flex; gap: 13px; height: 14px; padding: 0 5px 0 32px; align-items: center; color: #e4e4e4; }
.menurow .tight + .tight { margin-left: -6px; }
.menurow.second { padding-left: 29px; }
.mdi { margin-left: auto; }

.filetabs { display: flex; align-items: flex-end; height: 18px; background: #383838; padding-left: 13px; border-bottom: 1px solid #484848; }
.ftab { width: 87px; height: 15px; padding: 0 10px 0 8px; justify-content: space-between; color: #a5a5a5; background: #545454; clip-path: polygon(0 100%, 4px 0, calc(100% - 5px) 0, 100% 100%); }
.ftab.mid { width: 80px; padding: 0 7px 0 5px; }
.ftab.active { color: #f2f2f2; background: linear-gradient(#858585, #606060); padding: 0 10px 0 8px; }
.ftab span { font-size: 7px; color: #333; }
.ftab.plus { width: 20px; padding: 0; justify-content: center; color: #ccc; font-size: 10px; clip-path: polygon(0 0, calc(100% - 3px) 0, 100% 100%, 4px 100%); }

.bar { display: flex; height: 16px; align-items: center; background: linear-gradient(#5e5e5e, #525252); padding-left: 4px; }
.bar.two { height: 18px; padding-bottom: 1px; border-top: 1px solid #424242; border-bottom: 1px solid #303030; }
.strip { display: flex; }
.strip + .strip { margin-left: 2px; border-left: 2px solid #3c3c3c; padding-left: 2px; }
.grp { display: flex; }
.grp + .grp { border-left: 1px solid #747474; margin-left: 1px; }
.ic { width: 14px; height: 14px; }
.ic svg, .side svg { opacity: .92; }
.drop { width: 8px; height: 14px; }
.draw { display: grid; grid-template-columns: repeat(22, 1fr); width: 300px; border-right: 1px solid #3c3c3c; }
.draw .ic { width: auto; }
.draw b { font-size: 11px; line-height: 12px; font-weight: 500; color: #eee; }
.draw b.cursor { border-right: 1px solid #6f9fdc; }
.lay { margin-left: 6px; }
.combo { display: flex; align-items: center; height: 13px; background: #f1f1f1; color: #666; padding: 0 4px; margin-right: 3px; }
.combo select { flex: 1; min-width: 0; height: 13px; }
.combo.layer { width: 177px; margin: 0 1px 0 1px; padding-left: 2px; }
.combo.layer select { margin-left: -4px; }
.combo.color { width: 90px; margin-left: 4px; gap: 3px; }
.combo.ltype { width: 96px; gap: 3px; }
.combo.lweight { width: 73px; gap: 3px; }
.combo.plotst { width: 71px; padding-left: 6px; margin-right: 0; }
.swatch { width: 7px; height: 7px; border: 1px solid #222; background: #fff; }
.rule { width: 36px; height: 1px; background: #444; }
.rule.short { width: 18px; }
.dims { margin-left: 6px; }

.main { flex: 1; display: flex; min-height: 0; }
.left { flex: 1; min-width: 0; display: flex; flex-direction: column; }
.work { flex: 1; display: flex; min-height: 0; }
.side { width: 17px; padding-top: 5px; background: #575757; border-right: 3px solid #484848; }
.side button { width: 13px; height: 13px; }
.side hr { height: 1px; margin: 3px 0 2px; border: 0; background: #3c3c3c; }
.side hr.white { margin: 2px 1px 1px; background: #e0e0e0; }
.side b { width: 11px; height: 11px; font-size: 10px; line-height: 11px; text-align: center; color: #111; }
.side b.red { background: #e81414; color: #700; }
.side b.yellow { background: #e8e23c; }
.side b.cyan { background: #2fe0e4; color: #063; }
.canvas { flex: 1; background: #000; min-width: 0; }
.canvas text { font-family: "Liberation Sans", Arial, sans-serif; font-size: 11px; fill: #b4b4b4; }

.cmd { display: flex; height: 63px; }
.grip { width: 15px; background: linear-gradient(#6e6e6e, #424242); padding-top: 9px; }
.grip button { width: 13px; height: 14px; }
.console { flex: 1; display: flex; flex-direction: column; font-family: "DejaVu Sans Mono", "Liberation Mono", monospace; font-size: 9px; color: #222; border-top: 2px solid #707070; }
.history { flex: 1; margin: 0; padding: 9px 1px 0; font: inherit; line-height: 12px; background: #c8c8c8; }
.prompt { display: flex; align-items: center; height: 14px; background: #fff; border-bottom: 1px solid #999; padding-left: 7px; }
.prompt i { width: 3px; height: 3px; background: #7e8fb8; }
.prompt span { margin: 0 4px; }
.prompt b { color: #000; margin-right: 2px; }
.prompt input { flex: 1; min-width: 0; height: 13px; outline: none; }

.props { width: 138px; background: #5a5a5a; padding: 3px 10px 0 5px; border-left: 2px solid #444; font-size: 9px; }
.props h2 { margin: 0 0 8px 3px; font-size: 10px; line-height: 12px; font-weight: 400; color: #dcdcdc; }
.pick { display: flex; align-items: center; height: 16px; margin-right: -8px; gap: 3px; }
.selwrap { display: flex; align-items: center; width: 84px; height: 14px; border: 1px solid #7c7c7c; background: #626262; margin-left: -2px; margin-right: 1px; }
.selwrap select { flex: 1; min-width: 0; padding-left: 1px; border-right: 1px solid #7c7c7c; height: 12px; }
.selwrap .caret { margin: 0 2px; border-width: 2px; border-bottom: 0; }
.pick button { width: 12px; height: 14px; }
.props table { width: 100%; border-collapse: collapse; table-layout: fixed; }
.props tr { height: 14px; }
.props th, .props td { padding: 0; height: 14px; line-height: 13px; font-weight: 400; text-align: left; border-bottom: 1px solid #606060; overflow: hidden; white-space: nowrap; }
.props th[scope] { width: 61px; padding-left: 14px; font-size: 8px; }
.props td { font-size: 9px; color: #e6e6e6; border-right: 1px solid #626262; }
.props td.dim { color: #a3a3a3; }
.props .head th { background: #424242; border: 1px solid #4d4d4d; font-weight: 700; color: #f4f4f4; padding: 0 4px; }
.head th span { float: left; }
.head th em { float: right; font-style: normal; }
.props td i { display: inline-block; vertical-align: middle; }
.box { width: 5px; height: 5px; background: #fff; margin: 0 5px 0 1px; }
.line { width: 26px; height: 1px; background: #ddd; margin: 0 4px 0 1px; }

.status { display: flex; justify-content: space-between; height: 19px; background: #383838; font-weight: 500; }
.ltabs { display: flex; align-items: flex-start; padding: 1px 0 0 8px; }
.ltabs button { height: 12px; width: 48px; margin-right: -2px; color: #a0a0a0; background: #545454; clip-path: polygon(0 0, 100% 0, calc(100% - 5px) 100%, 7px 100%); }
.ltabs .on { color: #fff; font-weight: 700; background: #747474; }
.ltabs .add { width: 20px; margin-left: 2px; font-size: 10px; color: #ccc; }
.cells { display: flex; gap: 2px; padding-top: 1px; }
.cell { display: flex; align-items: center; gap: 1px; height: 18px; padding: 0 1px; background: #4a4a4a; border: 1px solid #686868; color: #f2f2f2; }
.coords { width: 122px; padding-right: 2px; justify-content: flex-end; }
.model { padding: 0 2px; }
.lite { border-top-color: #fff; border-width: 3px 2px 0; margin: 0 2px; }

.taskbar { position: relative; display: flex; align-items: center; height: 27px; background: #264a5e; padding-left: 4px; }
.wall { position: absolute; inset: 0; width: 100%; height: 100%; }
.tb { position: relative; width: 38px; height: 26px; margin-right: 3px; }
.tb.start { width: 22px; margin-right: 5px; }
.tb.run { background: #ffffff38; border: 1px solid #ffffff50; }
.tb.stack { width: 36px; margin-right: 5px; box-shadow: 2px 0 0 #ffffff30; }
.tray { position: relative; display: flex; align-items: center; gap: 2px; margin-left: auto; color: #f2f4f6; }
.clock { display: flex; flex-direction: column; align-items: center; width: 66px; }
</style>
